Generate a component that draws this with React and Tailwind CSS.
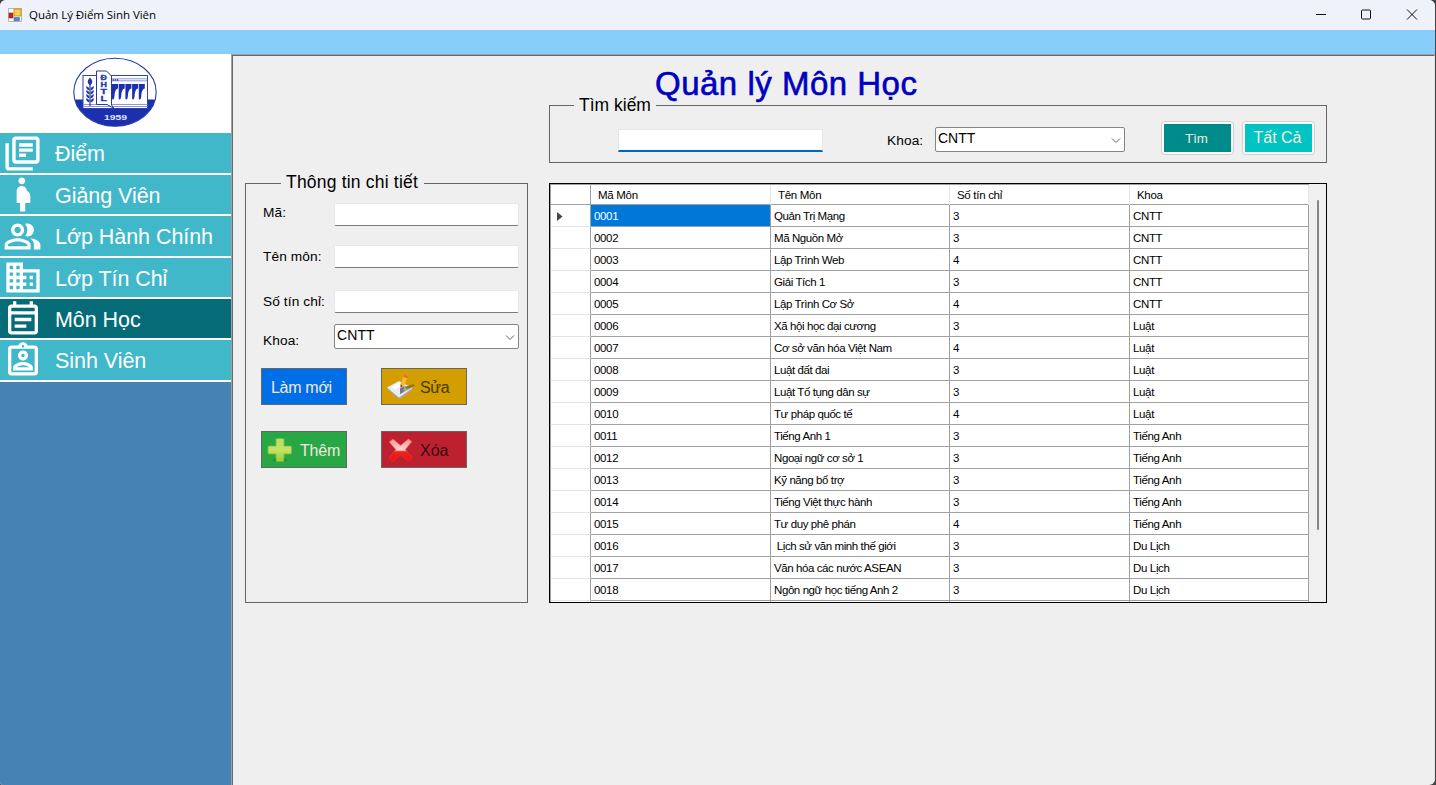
import React from "react";
import {
  MdOutlineLibraryBooks,
  MdPregnantWoman,
  MdOutlinePeopleAlt,
  MdOutlineBusiness,
  MdOutlineEventNote,
  MdOutlineAssignmentInd,
} from "react-icons/md";

const menu = [
  { label: "Điểm", Icon: MdOutlineLibraryBooks, size: "h-[42px]", place: "-ml-px mr-px", text: "mt-px" },
  { label: "Giảng Viên", Icon: MdPregnantWoman, size: "h-[41px]", place: "", text: "mt-[3px]" },
  { label: "Lớp Hành Chính", Icon: MdOutlinePeopleAlt, size: "h-[42px]", place: "pr-[2px]", text: "mt-px" },
  { label: "Lớp Tín Chỉ", Icon: MdOutlineBusiness, size: "h-[41px]", place: "pr-px", text: "mt-[3px]" },
  { label: "Môn Học", Icon: MdOutlineEventNote, size: "h-[41px]", place: "mt-px pr-px", text: "mt-[3px]", active: true },
  { label: "Sinh Viên", Icon: MdOutlineAssignmentInd, size: "h-[42px]", place: "pr-px", text: "mt-px" },
];

const rows = [
  ["0001", "Quản Trị Mạng", "3", "CNTT"],
  ["0002", "Mã Nguồn Mở", "3", "CNTT"],
  ["0003", "Lập Trình Web", "4", "CNTT"],
  ["0004", "Giải Tích 1", "3", "CNTT"],
  ["0005", "Lập Trình Cơ Sở", "4", "CNTT"],
  ["0006", "Xã hội học đại cương", "3", "Luật"],
  ["0007", "Cơ sở văn hóa Việt Nam", "4", "Luật"],
  ["0008", "Luật đất đai", "3", "Luật"],
  ["0009", "Luật Tố tụng dân sự", "3", "Luật"],
  ["0010", "Tư pháp quốc tế", "4", "Luật"],
  ["0011", "Tiếng Anh 1", "3", "Tiếng Anh"],
  ["0012", "Ngoại ngữ cơ sở 1", "3", "Tiếng Anh"],
  ["0013", "Kỹ năng bổ trợ", "3", "Tiếng Anh"],
  ["0014", "Tiếng Việt thực hành", "3", "Tiếng Anh"],
  ["0015", "Tư duy phê phán", "4", "Tiếng Anh"],
  ["0016", " Lịch sử văn minh thế giới", "3", "Du Lịch"],
  ["0017", "Văn hóa các nước ASEAN", "3", "Du Lịch"],
  ["0018", "Ngôn ngữ học tiếng Anh 2", "3", "Du Lịch"],
];

const columns = "grid grid-cols-[41px_180px_179px_180px_179px]";

function AppIcon() {
  return (
    <svg className="h-[14px] w-[14px]" viewBox="0 0 14 14">
      <rect x=".5" y=".5" width="13" height="13" fill="#fff" stroke="#b8b8bc" />
      <rect x="1" y="5" width="4" height="5" fill="#c22a1c" stroke="#8d1a12" strokeWidth=".6" />
      <rect x="6" y="1" width="7" height="7" fill="#f8cf4a" stroke="#b98a14" strokeWidth=".8" />
      <rect x="6" y="9.4" width="5.4" height="3.4" fill="#4b86e0" stroke="#3563b5" strokeWidth=".5" />
    </svg>
  );
}

function Logo() {
  return (
    <svg className="h-[76px] w-[110px]" viewBox="0 0 110 76">
      <defs>
        <clipPath id="oval">
          <ellipse cx="55" cy="38.3" rx="41.2" ry="34" />
        </clipPath>
      </defs>
      <rect x="10" y="45.5" width="90" height="30" fill="#1c30ad" clipPath="url(#oval)" />
      <ellipse cx="55" cy="38.3" rx="41.2" ry="34" fill="none" stroke="#2438a8" strokeWidth="1.1" />
      <rect x="23" y="21.5" width="64.5" height="33" fill="#fff" stroke="#2f42b0" strokeWidth="1" />
      <path d="M23 50.5h64.5M23 52.5h64.5M50 24.8h37M50 26.8h37" stroke="#8190d2" strokeWidth=".9" />
      <path d="M36.5 17h10l5 5v29l2.500 3.500-7-4h-10.500z" fill="#fff" stroke="#2438a8" strokeWidth="1" />
      <path d="M52.500 26h6" stroke="#2438a8" strokeWidth="1.600" strokeDasharray="1.500 .7" />
      {[52, 58.7, 65.4, 72.1, 78.8].map((x) => (
        <path key={x} transform={`translate(${x} 30)`} d="M0 0H6V4.500C3.600 5 2.800 8 2.500 12Q2.200 15.500 .8 15.500Q0 15.500 0 14Z" fill="#1c30ad" />
      ))}
      <path d="M30 27v25" stroke="#2438a8" strokeWidth="1.200" />
      <path d="M30 23.500q4.500 4.500 0 8q-4.500-3.500 0-8" fill="#2438a8" />
      {[33, 37, 41, 45].map((y) => (
        <path key={y} transform={`translate(30 ${y})`} d="M-.4 3.300Q-4 3-3.800-.7Q-.5-.2-.4 3.300M.4 3.300Q4 3 3.800-.7Q.5-.2.4 3.300" fill="#2438a8" />
      ))}
      <g fill="#2438a8" className="font-['Liberation_Sans'] text-[6.500px] font-bold" stroke="#2438a8" strokeWidth=".3">
        <text x="40.500" y="25.600" textLength="6.400" lengthAdjust="spacingAndGlyphs">Đ</text>
        <text x="40.500" y="32.800" textLength="6.400" lengthAdjust="spacingAndGlyphs">H</text>
        <text x="40.500" y="40" textLength="6.400" lengthAdjust="spacingAndGlyphs">T</text>
        <text x="40.500" y="47.200" textLength="6.400" lengthAdjust="spacingAndGlyphs">L</text>
      </g>
      <text x="55.500" y="66" textAnchor="middle" fill="#e3e8ff" textLength="23" lengthAdjust="spacingAndGlyphs" className="font-['Liberation_Sans'] text-[7px] font-bold">1959</text>
    </svg>
  );
}

function TextBox({ className = "" }) {
  return (
    <input
      className={`block h-[23px] w-[185px] rounded-[2px] border border-[#e8e8e8] border-b-[#7c7c7c] bg-white outline-none ${className}`}
    />
  );
}

function ComboBox({ className }) {
  return (
    <div className={`flex h-[25px] justify-between rounded-[2px] border border-[#858585] bg-white pl-[2px] pr-[3px] text-[14px] text-black ${className}`}>
      <span className="leading-[20px]">CNTT</span>
      <svg className="mt-[9px] h-[8px] w-[10px]" viewBox="0 0 10 8" fill="none" stroke="#666" strokeWidth="1">
        <path d="M1 1.500L5 5.500L9 1.500" />
      </svg>
    </div>
  );
}

function EditIcon() {
  return (
    <svg className="h-[26px] w-[30px] shrink-0" viewBox="0 0 30 26">
      <path d="M1 15L13 8.500L27 15L13.500 25.500Z" fill="#a8a9ad" />
      <path d="M1 13.500L13 7L26.500 14L13 23.500Z" fill="#e9ebf0" />
      <path d="M5 13L12.500 9L17 11L9 15.500Z" fill="#fff" />
      <path d="M14 14.500L17 12L26.500 13.500L18 18L14 20Z" fill="#a0a4ad" />
      <path d="M14 14.500L18 12.500L17.500 18L14 20Z" fill="#747983" />
      <path d="M19 13L28 10L28.500 12L21 15Z" fill="#8b721f" />
      <path d="M18 .5L22 2L18.500 11.500L14.500 13.500L14.700 10Z" fill="#f9b72c" />
      <path d="M18 .5L22 2L21.300 4.200L17.200 2.700Z" fill="#e7693e" />
      <path d="M14.700 10L16.500 12.200L14.500 13.500Z" fill="#6b4a24" />
    </svg>
  );
}

function PlusIcon() {
  return (
    <svg className="h-[26px] w-[26px] shrink-0" viewBox="0 0 26 26">
      <defs>
        <linearGradient id="plus" x1="0" y1="0" x2="0" y2="1">
          <stop offset="0" stopColor="#bada72" />
          <stop offset=".5" stopColor="#c5e35f" />
          <stop offset="1" stopColor="#98cb42" />
        </linearGradient>
      </defs>
      <ellipse cx="13" cy="23" rx="7" ry="2" fill="#1d8435" />
      <path d="M10 1.500h6q1 0 1 1v6.500h6.500q1 0 1 1v6q0 1-1 1H17v6.500q0 1-1 1h-6q-1 0-1-1V17H2q-1 0-1-1v-6q0-1 1-1h7V2.500q0-1 1-1" fill="url(#plus)" stroke="#79b93e" strokeWidth=".8" />
    </svg>
  );
}

function CrossIcon() {
  return (
    <svg className="h-[24px] w-[26px] shrink-0" viewBox="0 0 26 24">
      <defs>
        <linearGradient id="cross" x1="0" y1="0" x2="0" y2="1">
          <stop offset="0" stopColor="#ff8d86" />
          <stop offset=".5" stopColor="#ffd6d2" />
          <stop offset=".58" stopColor="#ee2420" />
          <stop offset="1" stopColor="#f40d0d" />
        </linearGradient>
      </defs>
      <path d="M1 4L5 .8L12.500 7.200L20.500 .8L24 3.500L17.500 11.500L24.500 19.500L20.500 23.200L12.500 16.500L5 23.200L1 19.800L7.700 11.500Z" fill="url(#cross)" stroke="#d8403c" strokeWidth=".6" />
    </svg>
  );
}

function ActionButton({ children, className }) {
  return (
    <button className={`flex h-[37px] w-[86px] items-center border border-[#666] text-[16px] leading-[20px] ${className}`}>
      {children}
    </button>
  );
}

function TitleBar() {
  return (
    <header className="flex h-[30px] items-center justify-between bg-[#eff2fa] pl-[8px] pr-[16px]">
      <div className="flex items-center gap-[7px]">
        <AppIcon />
        <span className="font-['Open_Sans'] text-[11.5px] leading-[16px] tracking-[-0.05px] text-black">Quản Lý Điểm Sinh Viên</span>
      </div>
      <svg className="h-[12px] w-[103px]" viewBox="0 0 103 12" fill="none" stroke="#111" strokeWidth="1">
        <path d="M0 5.500H10" />
        <rect x="45.500" y="1" width="9" height="9" rx="1" />
        <path d="M91 .5L101 10.500M101 .5L91 10.500" />
      </svg>
    </header>
  );
}

function Sidebar() {
  return (
    <nav className="flex w-[231px] flex-col bg-[#4682b4]">
      <div className="h-[79px] bg-white pl-[60px]">
        <Logo />
      </div>
      {menu.map(({ label, Icon, size, place, text, active }) => (
        <a
          key={label}
          className={`flex items-center border-b-2 border-white pl-[3px] text-[21.5px] tracking-[-0.05px] text-white ${size} ${active ? "bg-[#056b77]" : "bg-[#41b8c9]"}`}
        >
          <Icon className={`h-[41px] w-[41px] shrink-0 ${place}`} />
          <span className={`ml-[11px] whitespace-nowrap leading-[26px] ${text}`}>{label}</span>
        </a>
      ))}
    </nav>
  );
}

function DetailPanel() {
  return (
    <fieldset className="mt-[78px] h-[430px] w-[283px] border border-[#666]">
      <legend className="ml-[35px] h-[21px] w-[143px] whitespace-nowrap pl-[5px] text-[17.5px] leading-[19px] tracking-[0.2px]">Thông tin chi tiết</legend>
      <div className="grid grid-cols-[71px_185px] pl-[17px] pt-[9px] text-[13.7px] leading-[20px] tracking-[0.1px]">
        <label className="h-[42px]">Mã:</label>
        <TextBox />
        <label className="h-[45px] pt-[2px]">Tên môn:</label>
        <TextBox />
        <label className="h-[34px] pt-[2px]">Số tín chỉ:</label>
        <TextBox />
        <label className="pt-[7px]">Khoa:</label>
        <ComboBox className="w-[185px]" />
      </div>
      <div className="mt-[17px] grid grid-cols-[86px_86px] gap-x-[34px] gap-y-[26px] pl-[15px]">
        <ActionButton className="bg-[#006ee6] pl-[9px] tracking-[-0.3px] text-[#f4e9e6]">
          <span className="mt-[2px]">Làm mới</span>
        </ActionButton>
        <ActionButton className="gap-[4px] bg-[#d39e00] pl-[4px] tracking-[-0.3px] text-[#4a3800]">
          <EditIcon />
          <span className="mt-[2px]">Sửa</span>
        </ActionButton>
        <ActionButton className="gap-[7px] bg-[#28a745] pl-[5px] tracking-[-0.2px] text-[#f0e9e2]">
          <PlusIcon />
          <span className="mt-[2px]">Thêm</span>
        </ActionButton>
        <ActionButton className="gap-[6px] bg-[#bd2130] pl-[6px] text-[#3c0a10]">
          <CrossIcon />
          <span className="mt-[2px]">Xóa</span>
        </ActionButton>
      </div>
    </fieldset>
  );
}

function SearchPanel() {
  return (
    <fieldset className="h-[68px] border border-[#666]">
      <legend className="ml-[24px] h-[21px] w-[82px] whitespace-nowrap pl-[5px] text-[17.5px] leading-[20px]">Tìm kiếm</legend>
      <div className="flex items-start pl-[68px]">
        <input className="mt-[13px] h-[23px] w-[205px] border border-[#e3e6ea] border-b-2 border-b-[#0067c0] bg-white outline-none" />
        <label className="ml-[64px] mt-[15px] w-[48px] text-[13.7px] leading-[20px] tracking-[0.1px]">Khoa:</label>
        <ComboBox className="mt-[11px] w-[190px]" />
        <button className="ml-[36px] mt-[5px] h-[34px] w-[73px] rounded-[4px] border border-[#d0d0d0] bg-[#fdfdfd] p-[2px]">
          <span className="flex h-full items-center justify-center bg-[#008b8b] pr-[2px] pt-px text-[13.33px] text-[#f0ebe0]">Tìm</span>
        </button>
        <button className="ml-[8px] mt-[5px] h-[34px] w-[73px] rounded-[4px] border border-[#d0d0d0] bg-[#fdfdfd] p-[2px]">
          <span className="flex h-full items-center justify-center bg-[#00c3c3] pr-[2px] text-[16px] text-[#f5f0dc]">Tất Cả</span>
        </button>
      </div>
    </fieldset>
  );
}

function SubjectTable() {
  return (
    <div className="mt-[20px] flex h-[420px] border border-black bg-[#f0f0f0] text-[11.5px] text-black">
      <div className="h-full overflow-hidden bg-white">
        <div className={`${columns} h-[21px] border-b border-t border-[#a0a0a0] leading-[20px] tracking-[-0.3px]`}>
          <div className="border-l border-r border-[#a0a0a0]" />
          <div className="border-r border-[#e5e5e5] pl-[7px]">Mã Môn</div>
          <div className="border-r border-[#e5e5e5] pl-[7px]">Tên Môn</div>
          <div className="border-r border-[#e5e5e5] pl-[7px]">Số tín chỉ</div>
          <div className="border-r border-[#e5e5e5] pl-[7px]">Khoa</div>
        </div>
        {rows.map(([id, name, credits, faculty], i) => (
          <div key={id} className={`${columns} h-[22px] grid-rows-[22px] whitespace-pre leading-[23px] tracking-[-0.35px]`}>
            <div className="flex items-center border-b border-l border-r border-[#a0a0a0] border-b-[#e5e5e5] pl-[6px]">
              {i === 0 && (
                <svg className="mt-[2px] h-[9px] w-[6px]" viewBox="0 0 6 9">
                  <path d="M0 0L5.500 4.500L0 9Z" fill="#444" />
                </svg>
              )}
            </div>
            <div className={`border-b border-r border-[#a0a0a0] pl-[3px] ${i === 0 ? "bg-[#0078d7] text-white" : ""}`}>{id}</div>
            <div className="border-b border-r border-[#a0a0a0] pl-[3px] tracking-[-0.41px]">{name}</div>
            <div className="border-b border-r border-[#a0a0a0] pl-[3px]">{credits}</div>
            <div className="border-b border-r border-[#a0a0a0] pl-[3px]">{faculty}</div>
          </div>
        ))}
        <div className={`${columns} h-[22px]`}>
          <div className="border-l border-r border-[#a0a0a0]" />
          <div className="border-r border-[#a0a0a0]" />
          <div className="border-r border-[#a0a0a0]" />
          <div className="border-r border-[#a0a0a0]" />
          <div className="border-r border-[#a0a0a0]" />
        </div>
      </div>
      <div className="flex flex-1 justify-center pt-[16px]">
        <div className="h-[330px] w-[2px] rounded-full bg-[#868686]" />
      </div>
    </div>
  );
}

export default function App() {
  return (
    <div className="h-[785px] w-[1436px] overflow-hidden bg-[#444]">
      <div className="flex h-full w-[1435px] flex-col overflow-hidden rounded-[6px] rounded-bl-[3px] bg-[#efefef] font-['Liberation_Sans',sans-serif] text-black">
        <TitleBar />
        <div className="h-[24px] shrink-0 bg-[#87cefa]" />
        <div className="flex min-h-0 flex-1">
          <Sidebar />
          <main className="flex-1 border-l border-t border-[#a0a0a0]">
            <div className="h-full border-l border-r border-t border-[#696969] border-r-[#e3e3e3] pl-[12px]">
              <h1 className="h-[39px] whitespace-nowrap pl-[410px] text-[33px] leading-[55px] tracking-[0.5px] text-[#0000c0] [-webkit-text-stroke:0.6px_#0000c0]">
                Quản lý Môn Học
              </h1>
              <div className="grid grid-cols-[283px_778px] gap-x-[21px]">
                <DetailPanel />
                <div>
                  <SearchPanel />
                  <SubjectTable />
                </div>
              </div>
            </div>
          </main>
        </div>
      </div>
    </div>
  );
}
